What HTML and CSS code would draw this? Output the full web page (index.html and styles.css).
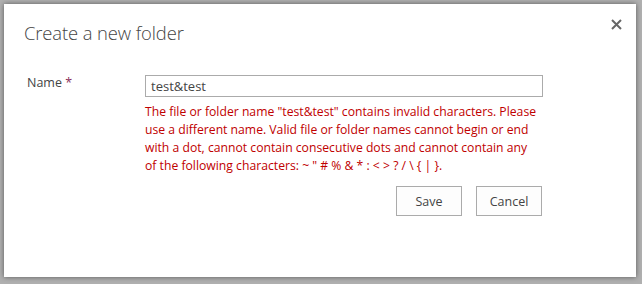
FILE: index.html
```html
<!DOCTYPE html>
<html>
<head>
<meta charset="utf-8">
<link rel="stylesheet" href="styles.css">
</head>
<body>
<div class="dialog">
  <div class="header">
    <h1 class="title">Create a new folder</h1>
    <button class="close" aria-label="Close">
      <svg width="11" height="11" viewBox="0 0 11 11"><path d="M1 1L10 10M10 1L1 10" stroke="#666" stroke-width="2"/></svg>
    </button>
  </div>
  <div class="form">
    <label class="label">Name <span class="req">*</span></label>
    <div class="field">
      <div class="input">test&amp;test</div>
      <div class="error">The file or folder name "test&amp;test" contains invalid characters. Please<br>use a different name. Valid file or folder names cannot begin or end<br>with a dot, cannot contain consecutive dots and cannot contain any<br>of the following characters: ~ " # % &amp; * : &lt; &gt; ? / \ { | }.</div>
      <div class="actions">
        <button class="btn">Save</button>
        <button class="btn">Cancel</button>
      </div>
    </div>
  </div>
</div>
</body>
</html>
```

FILE: styles.css
```css
html, body {
  margin: 0;
  height: 100%;
}
body {
  background: #b0b0b0;
  padding: 4px 6px 7px 4px;
  box-sizing: border-box;
  font-family: "Open Sans", "Noto Sans", sans-serif;
}
.dialog {
  background: #fff;
  width: 632px;
  height: 273px;
  box-shadow: 0 0 5px rgba(0,0,0,0.5);
  box-sizing: border-box;
  padding: 0 0 0 20px;
}
.header {
  display: flex;
  justify-content: space-between;
  align-items: flex-start;
  height: 65px;
}
.title {
  margin: 16px 0 0 0;
  font-weight: 300;
  font-size: 18.4px;
  color: #444;
  letter-spacing: -0.1px;
}
.close {
  border: 0;
  background: none;
  padding: 0;
  margin: 15px 14px 0 0;
  width: 11px;
  height: 11px;
  display: flex;
}
.form {
  display: flex;
  padding-top: 6px;
}
.label {
  width: 118px;
  padding-left: 3px;
  font-size: 12.5px;
  color: #444;
  line-height: 16px;
}
.req {
  color: #8a2f5c;
}
.field {
  width: 398px;
}
.input {
  height: 22px;
  border: 1px solid #ababab;
  box-sizing: border-box;
  padding: 0 5px;
  font-size: 13px;
  line-height: 20px;
  color: #444;
}
.error {
  margin-top: 6px;
  font-size: 12.2px;
  line-height: 18px;
  color: #c00000;
  white-space: nowrap;
}
.actions {
  display: flex;
  justify-content: flex-end;
  gap: 14px;
  margin-top: 11px;
  padding-right: 1px;
}
.btn {
  width: 66px;
  height: 30px;
  border: 1px solid #ababab;
  background: #fdfdfd;
  font-family: "Open Sans", "Noto Sans", sans-serif;
  font-size: 12.5px;
  color: #444;
  padding: 0;
}
```
